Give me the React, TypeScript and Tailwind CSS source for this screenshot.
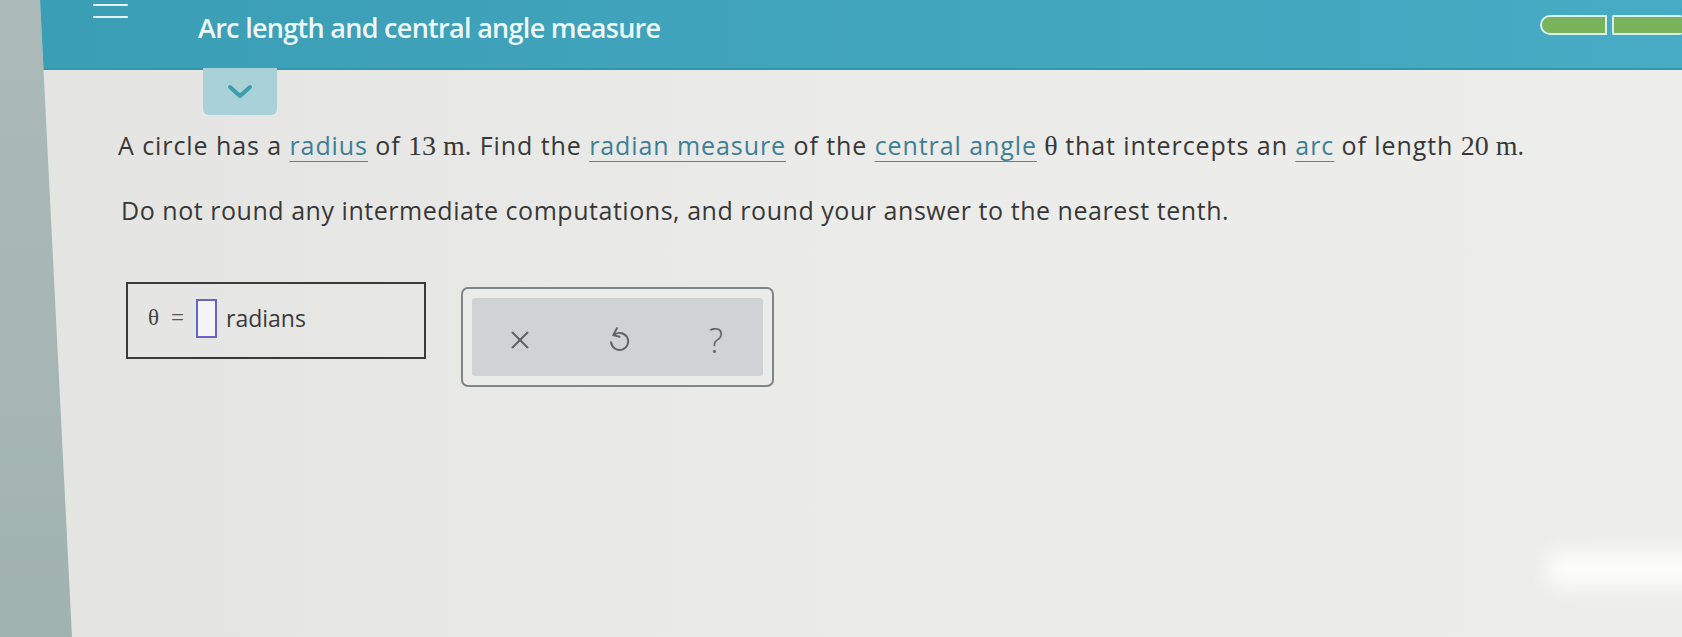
import { X } from 'lucide-react'

const SANS = "font-['Open_Sans','Liberation_Sans',sans-serif]"
const SERIF = "font-['Liberation_Serif','DejaVu_Serif',serif]"

function Term({ children }: { children: React.ReactNode }) {
  return (
    <span className="text-[#3f7f96] underline decoration-[#4d8aa0] decoration-1 underline-offset-[6px]">
      {children}
    </span>
  )
}

function MathText({ children }: { children: React.ReactNode }) {
  return <span className={`${SERIF} text-[28px] tracking-normal`}>{children}</span>
}

function UndoIcon() {
  return (
    <svg width="24" height="30" viewBox="0 0 22 28" fill="none" stroke="#5d6466" strokeWidth="1.8" strokeLinecap="round" strokeLinejoin="round">
      <path d="M7 9.5 A8 8 0 1 1 4.5 16" />
      <path d="M10 3 L6.5 9.5 L12.5 11" />
    </svg>
  )
}

function ProgressMeter() {
  return (
    <div className="flex items-center gap-[5px]">
      <div className="h-[20px] w-[67px] rounded-l-full rounded-r-[2px] border-2 border-[#d6efec] bg-[#79b35b]" />
      <div className="h-[20px] w-[70px] rounded-[2px] border-2 border-r-0 border-[#d6efec] bg-[#79b35b]" />
    </div>
  )
}

export default function App() {
  return (
    <div className={`relative flex h-[637px] w-[1682px] overflow-hidden bg-gradient-to-b from-[#abbab8] to-[#a1b3b1] ${SANS}`}>
      <div className="w-[40px] shrink-0" />
      <div className="flex min-w-0 flex-1 flex-col bg-gradient-to-r from-[#e4e4e2] via-[#ebebe9] to-[#ededeb] [clip-path:polygon(0_0,100%_0,100%_100%,32px_100%)]">
        {/* top bar */}
        <header className="flex h-[68px] shrink-0 items-start bg-gradient-to-r from-[#3a9eb5] to-[#48abc5] shadow-[0_2px_0_#3595aa]">
          <div className="ml-[53px] mt-[4px] flex w-[35px] flex-col gap-[10px]">
            <span className="h-[2px] rounded bg-[#e6f3f4]" />
            <span className="h-[2px] rounded bg-[#e6f3f4]" />
          </div>
          <h1 className="ml-[70px] mt-[8px] text-[27px] font-semibold tracking-[-0.7px] text-[#eef7f8]">
            Arc length and central angle measure
          </h1>
          <div className="ml-auto mt-[15px]">
            <ProgressMeter />
          </div>
        </header>

        {/* collapse tab */}
        <div className="ml-[163px] flex h-[47px] w-[74px] items-center justify-center rounded-b-[6px] bg-[#a8d2d7]">
          <svg width="26" height="16" viewBox="0 0 26 16" fill="none" stroke="#3d9db0" strokeWidth="4" strokeLinecap="round" strokeLinejoin="round">
            <path d="M3 3 L13 12 L23 3" />
          </svg>
        </div>

        {/* question */}
        <div className="ml-[78px] mt-[10px] flex flex-col gap-[24px] text-[25px] text-[#383838]">
          <p className="leading-[40px] tracking-[0.92px]">
            A circle has a <Term>radius</Term> of <MathText>13 m</MathText>. Find the <Term>radian measure</Term> of the{' '}
            <Term>central angle</Term> <MathText>θ</MathText> that intercepts an <Term>arc</Term> of length{' '}
            <MathText>20 m</MathText>.
          </p>
          <p className="ml-[3px] leading-[40px] tracking-[0.54px]">
            Do not round any intermediate computations, and round your answer to the nearest tenth.
          </p>
        </div>

        {/* answer row */}
        <div className="ml-[86px] mt-[52px] flex items-start gap-[35px]">
          <div className="flex h-[77px] w-[300px] items-center border-2 border-[#3a3a3a] pl-[20px] pb-[4px]">
            <span className={`${SERIF} text-[23px] text-[#444]`}>θ</span>
            <span className={`${SERIF} ml-[12px] text-[23px] text-[#555]`}>=</span>
            <span className="ml-[12px] h-[39px] w-[21px] border-2 border-[#6a62c6] bg-[#f4f4f8]" />
            <span className="ml-[9px] text-[23px] text-[#3a3a3a]">radians</span>
          </div>
          <div className="mt-[5px] rounded-[7px] border-2 border-[#7d8789] bg-[#ebebea] p-[9px]">
            <div className="flex h-[78px] w-[291px] items-center gap-[58px] rounded-[3px] bg-[#cfd3d3] pl-[28px] pt-[6px] text-[#5d6466]">
              <span className="flex w-[40px] justify-center">
                <X size={30} strokeWidth={1.6} />
              </span>
              <span className="flex w-[40px] justify-center">
                <UndoIcon />
              </span>
              <span className="flex w-[40px] justify-center text-[34px] font-light leading-none">?</span>
            </div>
          </div>
        </div>
      </div>

      {/* screen glare */}
      <div className="pointer-events-none absolute left-[1545px] top-[550px] h-[38px] w-[220px] rounded-full bg-white/85 blur-[10px]" />
    </div>
  )
}
